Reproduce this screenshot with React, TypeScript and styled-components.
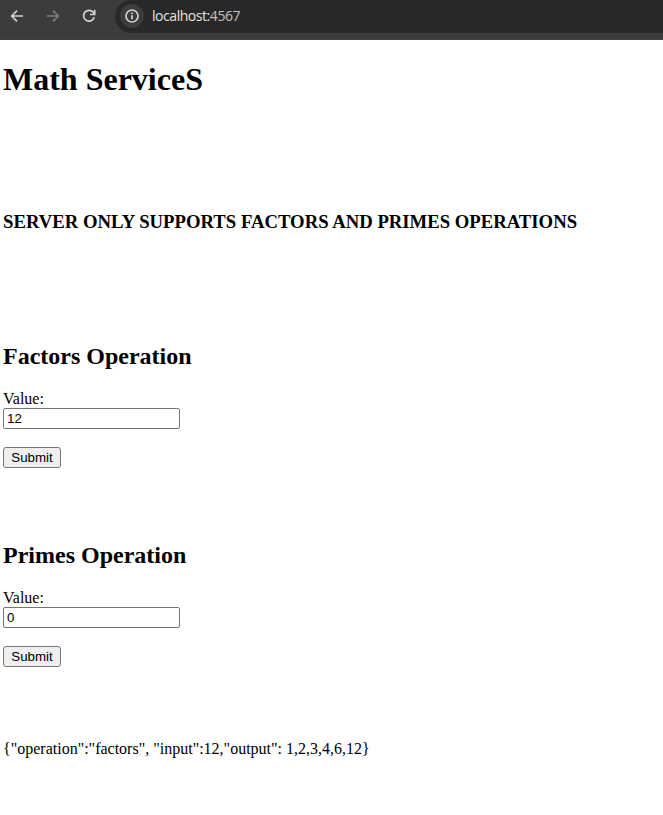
import React from "react";
import styled, { createGlobalStyle } from "styled-components";

const GlobalStyle = createGlobalStyle`
  * { box-sizing: border-box; }
  body {
    margin: 0;
    background: #fff;
    color: #000;
    font: 16px/18px "Liberation Serif", "Times New Roman", serif;
    overflow: hidden;
  }
`;

const Toolbar = styled.header`
  display: flex;
  align-items: flex-start;
  height: 40px;
  background: #3c3c3c;
  border-bottom: 2px solid #423e40;
`;

const NavButtons = styled.nav`
  display: flex;
  width: 115px;
  height: 32px;
  padding-left: 9px;
  gap: 20px;
  align-items: center;
`;

const NavIcon = styled.svg<{ $muted?: boolean }>`
  width: 16px;
  height: 16px;
  flex: none;
  fill: none;
  stroke: ${(p) => (p.$muted ? "#7c7c7c" : "#d2d2d2")};
  stroke-width: 1.7;
`;

const AddressBar = styled.div`
  display: flex;
  align-items: center;
  flex: 1;
  height: 33px;
  padding: 0 0 1px 5px;
  background: #282828;
  border-radius: 16.5px 0 0 16.5px;
`;

const SiteInfo = styled.span`
  display: flex;
  align-items: center;
  justify-content: center;
  width: 24px;
  height: 24px;
  margin-right: 8px;
  border-radius: 50%;
  background: #3c3c3c;
`;

const Url = styled.span`
  color: #e3e3e3;
  font: 14px/20px "Open Sans", "Noto Sans", sans-serif;
  letter-spacing: -0.45px;
`;

const Port = styled.span`
  color: #c0c0c0;
`;

const Page = styled.main`
  padding: 21px 3px 0;
`;

const Title = styled.h1`
  margin: 0 0 113px;
  font-size: 32px;
  line-height: 37px;
`;

const Notice = styled.h3`
  margin: 0 0 111px;
  font-size: 18.72px;
  line-height: 21px;
  white-space: nowrap;
`;

const Operation = styled.form`
  display: flex;
  flex-direction: column;
  align-items: flex-start;
  height: 199px;
`;

const OperationTitle = styled.h2`
  margin: 0 0 20px;
  font-size: 24px;
  line-height: 27px;
`;

const Field = styled.input`
  width: 177px;
  height: 21px;
  margin: 0 0 18px;
  padding: 1px 3px;
  border: 1px solid #767676;
  border-radius: 2px;
  outline: none;
  color: #000;
  background: #fff;
  font: 13.333px "Liberation Sans", Arial, sans-serif;
`;

const Submit = styled.button`
  width: 58px;
  height: 21px;
  padding: 0;
  border: 1px solid #767676;
  border-radius: 3px;
  color: #000;
  background: #efefef;
  font: 13.333px/17px "Liberation Sans", Arial, sans-serif;
`;

const Result = styled.div`
  margin-top: -1px;
  white-space: pre;
`;

function OperationForm({ name, value }: { name: string; value: string }) {
  return (
    <Operation onSubmit={(e) => e.preventDefault()}>
      <OperationTitle>{name} Operation</OperationTitle>
      <label htmlFor={name}>Value:</label>
      <Field id={name} defaultValue={value} />
      <Submit type="submit">Submit</Submit>
    </Operation>
  );
}

export default function App() {
  return (
    <>
      <GlobalStyle />
      <Toolbar>
        <NavButtons>
          <NavIcon viewBox="0 0 16 16">
            <path d="M14 8H3M8 2.7 2.7 8 8 13.3" />
          </NavIcon>
          <NavIcon viewBox="0 0 16 16" $muted>
            <path d="M2 8h11M8 2.7 13.3 8 8 13.3" />
          </NavIcon>
          <NavIcon viewBox="0 0 16 16">
            <path d="M13.2 9.2A5.4 5.4 0 1 1 12.4 4.6L13.4 5.8M13.7 1.8v4.7H9" />
          </NavIcon>
        </NavButtons>
        <AddressBar>
          <SiteInfo>
            <NavIcon viewBox="0 0 16 16">
              <circle cx="8" cy="8" r="6" />
              <path d="M8 7.2v4M8 4.6v1.6" />
            </NavIcon>
          </SiteInfo>
          <Url>
            localhost:<Port>4567</Port>
          </Url>
        </AddressBar>
      </Toolbar>
      <Page>
        <Title>Math ServiceS</Title>
        <Notice>SERVER ONLY SUPPORTS FACTORS AND PRIMES OPERATIONS</Notice>
        <OperationForm name="Factors" value="12" />
        <OperationForm name="Primes" value="0" />
        <Result>{'{"operation":"factors", "input":12,"output": 1,2,3,4,6,12}'}</Result>
      </Page>
    </>
  );
}
